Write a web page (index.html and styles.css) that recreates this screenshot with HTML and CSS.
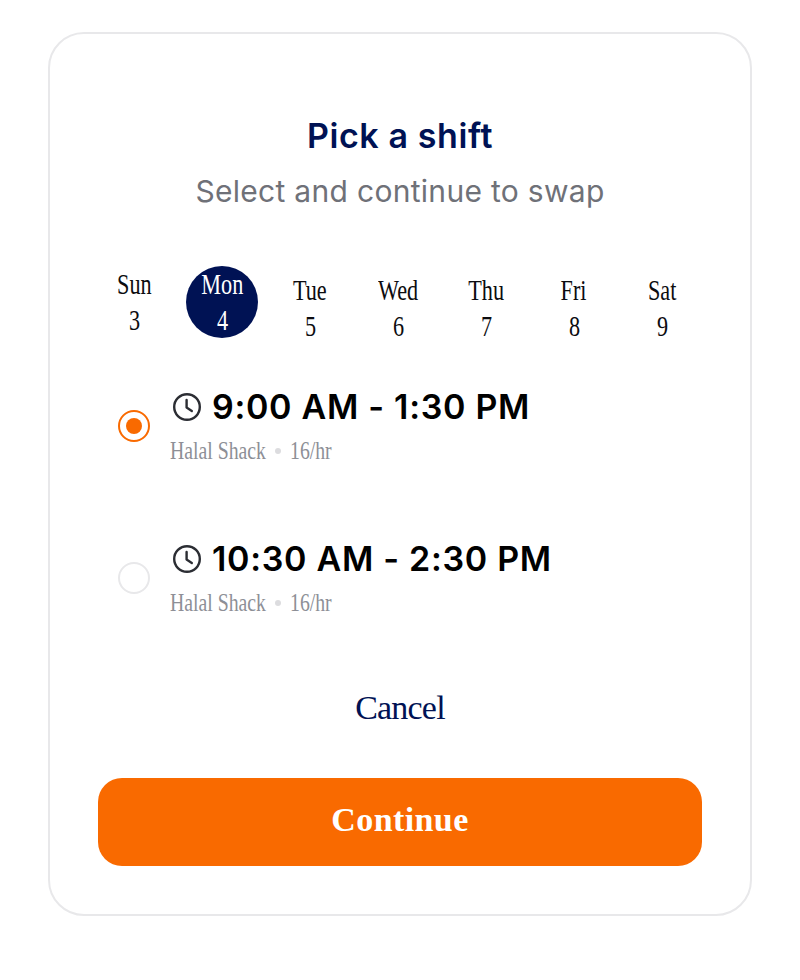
FILE: index.html
```html
<!DOCTYPE html>
<html lang="en">
<head>
    <meta charset="UTF-8">
    <title>Pick a shift</title>
    <link rel="stylesheet" href="styles.css">
</head>
<body>
    <div class="card">
        <h1 class="title">Pick a shift</h1>
        <p class="subtitle">Select and continue to swap</p>

        <!-- Week strip -->
        <div class="days">
            <div class="day day-raised"><span class="cond">Sun</span><span class="cond">3</span></div>
            <div class="day day-active"><span class="cond">Mon</span><span class="cond">4</span></div>
            <div class="day"><span class="cond">Tue</span><span class="cond">5</span></div>
            <div class="day"><span class="cond">Wed</span><span class="cond">6</span></div>
            <div class="day"><span class="cond">Thu</span><span class="cond">7</span></div>
            <div class="day"><span class="cond">Fri</span><span class="cond">8</span></div>
            <div class="day"><span class="cond">Sat</span><span class="cond">9</span></div>
        </div>

        <!-- Shifts -->
        <div class="shift">
            <span class="radio radio-on"></span>
            <div class="shift-info">
                <div class="shift-time">
                    <svg class="clock" width="30" height="30" viewBox="0 0 30 30" fill="none" stroke="#2b2d33" stroke-width="2.4" stroke-linecap="round" stroke-linejoin="round"><circle cx="15" cy="15" r="12.8"/><path d="M14.6 8v7.6l5.2 3.4"/></svg>
                    9:00 AM - 1:30 PM
                </div>
                <div class="shift-meta"><span class="cond-meta">Halal Shack</span><i class="dot"></i><span class="cond-meta">16/hr</span></div>
            </div>
        </div>
        <div class="shift">
            <span class="radio"></span>
            <div class="shift-info">
                <div class="shift-time">
                    <svg class="clock" width="30" height="30" viewBox="0 0 30 30" fill="none" stroke="#2b2d33" stroke-width="2.4" stroke-linecap="round" stroke-linejoin="round"><circle cx="15" cy="15" r="12.8"/><path d="M14.6 8v7.6l5.2 3.4"/></svg>
                    10:30 AM - 2:30 PM
                </div>
                <div class="shift-meta"><span class="cond-meta">Halal Shack</span><i class="dot"></i><span class="cond-meta">16/hr</span></div>
            </div>
        </div>

        <div class="cancel">Cancel</div>
        <button class="continue-btn">Continue</button>
    </div>
</body>
</html>
```
FILE: styles.css
```css
:root {
    --navy: #001254;
    --orange: #f96a00;
    --line: #e8e8ea;
}

* {
    margin: 0;
    padding: 0;
    box-sizing: border-box;
}

body {
    background: white;
    padding: 32px 48px 0;
    font-family: 'Inter', sans-serif;
}

.card {
    height: 884px;
    border: 2px solid var(--line);
    border-radius: 36px;
    padding: 82px 48px 0;
}

.title {
    color: var(--navy);
    font-size: 34px;
    font-weight: 600;
    letter-spacing: 0.6px;
    line-height: 40px;
    text-align: center;
}

.subtitle {
    color: #6f7178;
    font-size: 30px;
    letter-spacing: 0.3px;
    line-height: 36px;
    margin-top: 17px;
    text-align: center;
}

.days {
    display: flex;
    margin: 57px -4px 0 -8px;
    justify-content: center;
}

.day {
    width: 88px;
    height: 72px;
    display: flex;
    flex-direction: column;
    align-items: center;
    padding-top: 6px;
    color: #0c0c0f;
    font-family: 'Liberation Serif', serif;
    font-size: 30px;
    line-height: 36px;
}

.cond {
    display: block;
    transform: scaleX(0.74);
}

.day-raised {
    padding-top: 0;
}

.day-active {
    width: 72px;
    margin: 0 8px;
    padding-top: 0;
    border-radius: 50%;
    background: var(--navy);
    color: white;
}

.shift {
    display: flex;
    align-items: center;
    margin-left: 20px;
    height: 152px;
}

.days + .shift {
    margin-top: 12px;
}

.radio {
    width: 32px;
    height: 32px;
    flex-shrink: 0;
    border: 2px solid var(--line);
    border-radius: 50%;
    display: flex;
    align-items: center;
    justify-content: center;
}

.radio-on {
    border-color: var(--orange);
}

.radio-on::after {
    content: "";
    width: 16px;
    height: 16px;
    border-radius: 50%;
    background: var(--orange);
}

.shift-info {
    margin-left: 20px;
    margin-bottom: 2px;
}

.shift-time {
    display: flex;
    align-items: center;
    gap: 10px;
    color: black;
    font-size: 34px;
    font-weight: 600;
    letter-spacing: 0.7px;
    line-height: 44px;
}

.clock {
    flex-shrink: 0;
    margin-left: 2px;
}

.shift-meta {
    display: flex;
    align-items: center;
    margin-top: 7px;
    color: #8d8f96;
    font-family: 'Liberation Serif', serif;
    font-size: 25px;
    line-height: 30px;
    white-space: nowrap;
}

.cond-meta {
    display: block;
    transform: scaleX(0.79);
    transform-origin: left center;
}

.cond-meta:first-child {
    width: 96px;
}

.dot {
    width: 6px;
    height: 6px;
    margin: 0 9px;
    border-radius: 50%;
    background: #dcdcdf;
}

.cancel {
    color: var(--navy);
    font-family: 'Liberation Serif', serif;
    font-size: 34px;
    letter-spacing: -0.8px;
    line-height: 40px;
    text-align: center;
    margin-top: 34px;
}

.continue-btn {
    display: block;
    width: 100%;
    height: 88px;
    margin-top: 50px;
    padding-bottom: 4px;
    border: none;
    border-radius: 24px;
    background: var(--orange);
    color: white;
    font-family: 'Liberation Serif', serif;
    font-size: 34px;
    font-weight: 700;
    letter-spacing: 0.4px;
}
```
